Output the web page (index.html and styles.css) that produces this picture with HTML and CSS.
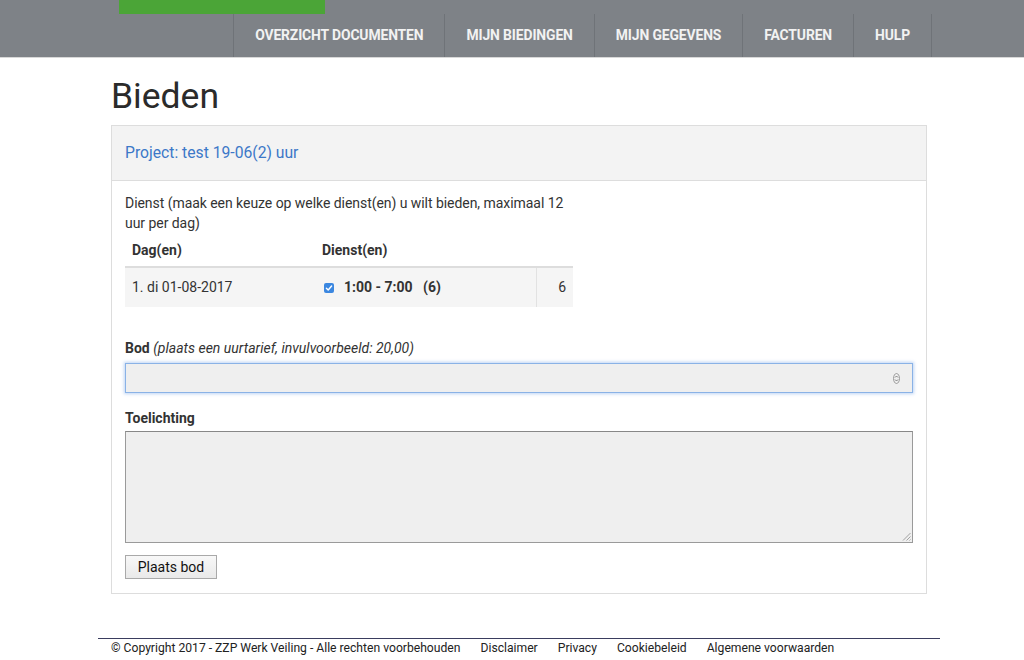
FILE: index.html
```html
<!DOCTYPE html>
<html lang="nl">
<head>
<meta charset="utf-8">
<title>Bieden</title>
<link rel="stylesheet" href="styles.css">
</head>
<body>
<header class="topbar">
  <div class="topbar-inner">
    <div class="logo-bar"></div>
    <nav class="mainnav">
      <a class="nav-item" href="#">Overzicht documenten</a>
      <a class="nav-item" href="#">Mijn biedingen</a>
      <a class="nav-item" href="#">Mijn gegevens</a>
      <a class="nav-item" href="#">Facturen</a>
      <a class="nav-item" href="#">Hulp</a>
    </nav>
  </div>
</header>

<main class="container">
  <h1 class="page-title">Bieden</h1>
  <section class="panel">
    <div class="panel-heading">Project: test 19-06(2) uur</div>
    <div class="panel-body">
      <div class="half">
        <p class="intro">Dienst (maak een keuze op welke dienst(en) u wilt bieden, maximaal 12 uur per dag)</p>
        <table class="shifts">
          <thead>
            <tr><th class="c1">Dag(en)</th><th class="c2">Dienst(en)</th><th class="c3"></th></tr>
          </thead>
          <tbody>
            <tr>
              <td class="c1">1. di 01-08-2017</td>
              <td class="c2"><label class="shift"><span class="check"><svg width="10" height="10" viewBox="0 0 10 10"><rect x="0" y="0" width="10" height="10" rx="2" fill="#3b87e0"/><path d="M2.4 5.2 L4.2 7 L7.6 3" stroke="#fff" stroke-width="1.4" fill="none" stroke-linecap="round" stroke-linejoin="round"/></svg></span><b>1:00 - 7:00&nbsp;&nbsp; (6)</b></label></td>
              <td class="c3">6</td>
            </tr>
          </tbody>
        </table>
      </div>

      <div class="field field-bod">
        <div class="label"><b>Bod</b> <i>(plaats een uurtarief, invulvoorbeeld: 20,00)</i></div>
        <div class="input focus">
          <span class="spin"><svg width="7" height="11" viewBox="0 0 7 11"><ellipse cx="3.5" cy="5.5" rx="3" ry="5" fill="none" stroke="#888" stroke-width="0.8"/><path d="M2 4.5 L3.5 3 L5 4.5 M2 6.5 L3.5 8 L5 6.5" fill="none" stroke="#666" stroke-width="0.8"/></svg></span>
        </div>
      </div>

      <div class="field field-toel">
        <div class="label"><b>Toelichting</b></div>
        <div class="textarea">
          <span class="grip"><svg width="9" height="9" viewBox="0 0 9 9"><path d="M8.5 1 L1 8.5 M8.5 4.5 L4.5 8.5 M8.5 7.5 L7.5 8.5" stroke="#999" stroke-width="0.9"/></svg></span>
        </div>
      </div>

      <button class="btn" type="button">Plaats bod</button>
    </div>
  </section>
</main>

<footer class="footer">
  <div class="footer-inner">
    <span>© Copyright 2017 - ZZP Werk Veiling - Alle rechten voorbehouden</span>
    <a href="#">Disclaimer</a>
    <a href="#">Privacy</a>
    <a href="#">Cookiebeleid</a>
    <a href="#">Algemene voorwaarden</a>
  </div>
</footer>
</body>
</html>
```

FILE: styles.css
```css
* { box-sizing: border-box; }
html, body { margin: 0; padding: 0; }
body {
  font-family: Roboto, "Liberation Sans", Arial, sans-serif;
  font-size: 14px;
  line-height: 20px;
  color: #333;
  background: #fff;
}

.topbar {
  background: #7e8287;
  height: 58px;
  border-bottom: 1px solid #d8d8d8;
}
.topbar-inner {
  margin-left: 96px;
  width: 836px;
  height: 57px;
  display: flex;
  position: relative;
}
.logo-bar {
  position: absolute;
  left: 23px;
  top: 0;
  width: 206px;
  height: 14px;
  background: #4ba537;
}
.mainnav {
  margin-left: auto;
  margin-top: 14px;
  display: flex;
  height: 43px;
  border-right: 1px solid #6f7378;
}
.nav-item {
  display: block;
  padding: 0 21px;
  line-height: 43px;
  border-left: 1px solid #6f7378;
  color: #f2f2f2;
  text-decoration: none;
  text-transform: uppercase;
  font-weight: 700;
  font-size: 13.9px;
  letter-spacing: -0.12px;
}

.container {
  margin-left: 111px;
  width: 816px;
}
.page-title {
  margin: 0;
  padding-top: 17px;
  height: 67px;
  font-size: 35.5px;
  line-height: 42px;
  font-weight: 400;
  color: #2b2b2b;
}
.panel {
  border: 1px solid #ddd;
  background: #fff;
}
.panel-heading {
  height: 55px;
  display: flex;
  align-items: center;
  padding: 0 13px;
  background: #f3f3f3;
  border-bottom: 1px solid #ddd;
  color: #3c78c8;
  font-size: 15.7px;
}
.panel-body {
  padding: 12px 13px 14px;
}
.half { width: 448px; }
.intro { margin: 0; letter-spacing: -0.05px; }

.shifts {
  width: 448px;
  border-collapse: collapse;
  margin-top: 0;
}
.shifts th {
  text-align: left;
  font-weight: 700;
  height: 34px;
  padding: 0 7px;
  vertical-align: middle;
  border-bottom: 2px solid #ddd;
}
.shifts td {
  height: 40px;
  padding: 0 7px 1px;
  background: #f5f5f5;
  vertical-align: middle;
}
.shifts .c1 { width: 190px; }
.shifts .c2 { width: 221px; }
.shifts td.c2 { padding-left: 9px; }
.shifts .c3 { width: 37px; text-align: right; }
.shifts td.c3 { border-left: 1px solid #e2e2e2; }
.shift { display: flex; align-items: center; }
.check { display: inline-flex; margin-right: 10px; margin-top: 2px; }

.field-bod { margin-top: 31px; }
.label { line-height: 20px; }
.input {
  margin-top: 5px;
  height: 30px;
  width: 788px;
  background: #efefef;
  border: 1px solid #8ab2e6;
  box-shadow: 0 0 3px 1px rgba(110, 160, 230, 0.45);
  display: flex;
  align-items: center;
  justify-content: flex-end;
  padding-right: 12px;
}
.spin { display: inline-flex; }
.field-toel { margin-top: 15px; }
.textarea {
  margin-top: 3px;
  height: 112px;
  width: 788px;
  background: #efefef;
  border: 1px solid #9a9a9a;
  border-top-color: #888;
  display: flex;
  align-items: flex-end;
  justify-content: flex-end;
}
.grip { display: inline-flex; margin: 0 1px 1px 0; }

.btn {
  margin-top: 12px;
  display: block;
  width: 92px;
  height: 24px;
  padding: 0;
  font-family: Roboto, "Liberation Sans", Arial, sans-serif;
  font-size: 14px;
  color: #111;
  background: linear-gradient(#f8f8f8, #e9e9e9);
  border: 1px solid #a9a9a9;
  border-radius: 0;
}

.footer {
  margin-top: 44px;
}
.footer-inner {
  margin-left: 98px;
  width: 842px;
  border-top: 1px solid #3a3d5e;
  padding: 1px 0 0 13px;
  font-size: 12.15px;
  line-height: 16px;
  color: #222;
  display: flex;
  gap: 20px;
}
.footer-inner a { color: #222; text-decoration: none; }
```
